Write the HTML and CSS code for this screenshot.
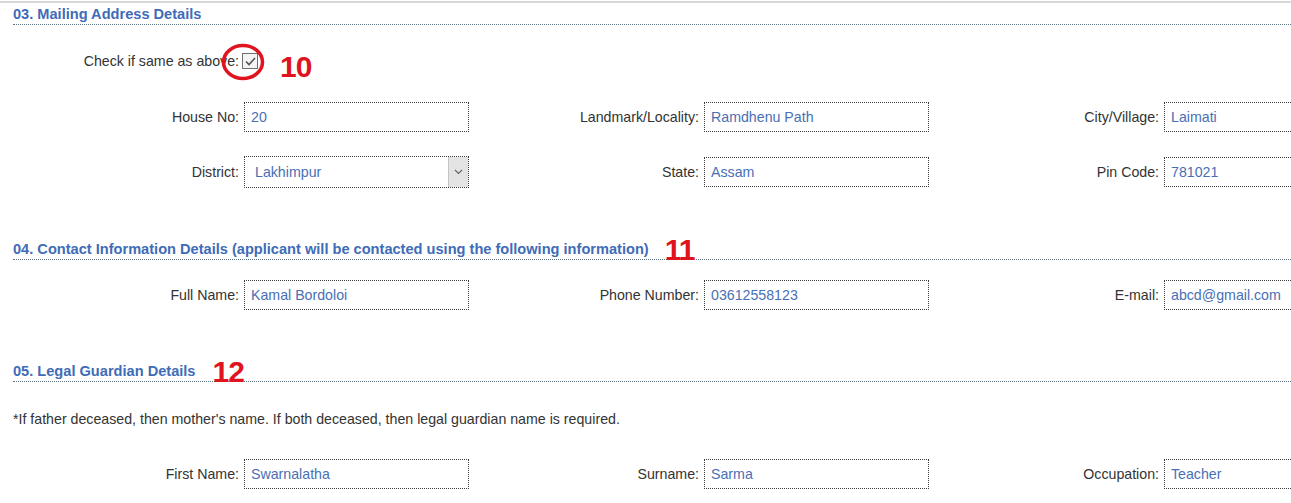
FILE: index.html
```html
<!DOCTYPE html>
<html>
<head>
<meta charset="utf-8">
<link rel="stylesheet" href="styles.css">
</head>
<body>
<div class="topline"></div>
<div class="page">
  <h2 class="heading h-03">03. Mailing Address Details</h2>

  <div class="check-row">
    <span class="label">Check if same as above:</span>
    <span class="check-wrap">
      <span class="checkbox">
        <svg width="11" height="9" viewBox="0 0 11 9"><path d="M1 4.5 L4 7.5 L10 1" fill="none" stroke="#555" stroke-width="1.6"/></svg>
      </span>
      <svg class="ring" width="44" height="38" viewBox="0 0 44 38"><ellipse cx="22" cy="19" rx="19.5" ry="16.5" fill="none" stroke="#e0141e" stroke-width="3.5"/></svg>
    </span>
    <span class="num num-10">10</span>
  </div>

  <div class="row row-1">
    <div class="field"><span class="label">House No:</span><input class="box" value="20" readonly></div>
    <div class="field"><span class="label">Landmark/Locality:</span><input class="box" value="Ramdhenu Path" readonly></div>
    <div class="field"><span class="label">City/Village:</span><input class="box" value="Laimati" readonly></div>
  </div>

  <div class="row row-2">
    <div class="field"><span class="label">District:</span>
      <div class="box select"><span class="select-text">Lakhimpur</span><span class="arrow"><svg width="9" height="6" viewBox="0 0 9 6"><path d="M1 1 L4.5 4.5 L8 1" fill="none" stroke="#666" stroke-width="1.2"/></svg></span></div>
    </div>
    <div class="field"><span class="label">State:</span><input class="box" value="Assam" readonly></div>
    <div class="field"><span class="label">Pin Code:</span><input class="box" value="781021" readonly></div>
  </div>

  <h2 class="heading h-04">04. Contact Information Details (applicant will be contacted using the following information)<span class="num num-11">11</span></h2>

  <div class="row row-3">
    <div class="field"><span class="label">Full Name:</span><input class="box" value="Kamal Bordoloi" readonly></div>
    <div class="field"><span class="label">Phone Number:</span><input class="box" value="03612558123" readonly></div>
    <div class="field"><span class="label">E-mail:</span><input class="box" value="abcd@gmail.com" readonly></div>
  </div>

  <h2 class="heading h-05">05. Legal Guardian Details<span class="num num-12">12</span></h2>

  <p class="note">*If father deceased, then mother's name. If both deceased, then legal guardian name is required.</p>

  <div class="row row-4">
    <div class="field"><span class="label">First Name:</span><input class="box" value="Swarnalatha" readonly></div>
    <div class="field"><span class="label">Surname:</span><input class="box" value="Sarma" readonly></div>
    <div class="field"><span class="label">Occupation:</span><input class="box" value="Teacher" readonly></div>
  </div>
</div>
</body>
</html>
```

FILE: styles.css
```css
html, body {
  margin: 0;
  padding: 0;
  overflow: hidden;
  background: #ffffff;
}

body {
  font-family: "Liberation Sans", Arial, sans-serif;
  font-size: 14.2px;
  color: #333333;
}

.topline {
  height: 2px;
  margin-top: 1px;
  background: #d8d8d8;
}

.page {
  padding-left: 13px;
}

.heading {
  margin: 0;
  font-size: 14.6px;
  font-weight: bold;
  line-height: 19px;
  color: #3f6cb7;
  border-bottom: 1px dotted #5d7585;
  white-space: nowrap;
}

.h-03 { margin-top: 2px; }
.h-04 { margin-top: 52px; }
.h-05 { margin-top: 52px; }

.num {
  display: inline-block;
  font-family: "Liberation Sans", Arial, sans-serif;
  font-weight: bold;
  font-size: 30px;
  line-height: 0;
  color: #e0141e;
  letter-spacing: -1px;
}

.num-11 { margin-left: 16px; vertical-align: -6px; }
.num-12 { margin-left: 17px; vertical-align: -6px; }

.check-row {
  display: flex;
  align-items: center;
  height: 30px;
  margin-top: 21px;
}

.label {
  width: 226px;
  flex: none;
  text-align: right;
  margin-right: 5px;
  white-space: nowrap;
}

.check-row .label {
  margin-right: 3px;
}

.check-wrap {
  position: relative;
  display: inline-flex;
}

.checkbox {
  width: 16px;
  height: 16px;
  box-sizing: border-box;
  border: 1px solid #707070;
  background: #f4f4f4;
  display: flex;
  align-items: center;
  justify-content: center;
}

.ring {
  position: absolute;
  left: -21px;
  top: -10px;
}

.num-10 {
  margin-left: 22px;
  position: relative;
  top: 6px;
}

.row {
  display: grid;
  grid-template-columns: repeat(3, 460px);
}

.row-1 { margin-top: 26px; }
.row-2 { margin-top: 24px; }
.row-3 { margin-top: 20px; }
.row-4 { margin-top: 31px; }

.field {
  display: flex;
  align-items: center;
}

.box {
  width: 225px;
  height: 30px;
  box-sizing: border-box;
  border: 1px dotted #3a3a3a;
  padding: 0 6px;
  margin: 0;
  font-family: "Liberation Sans", Arial, sans-serif;
  font-size: 14.2px;
  color: #4a6fb4;
  background: #ffffff;
  outline: none;
}

.select {
  height: 32px;
  display: flex;
  align-items: center;
  padding: 0 0 0 10px;
}

.select-text {
  flex: 1;
}

.arrow {
  width: 19px;
  align-self: stretch;
  background: #e4e4e4;
  border-left: 1px solid #c4c4c4;
  display: flex;
  align-items: center;
  justify-content: center;
}

.note {
  margin: 29px 0 0 0;
  line-height: 17px;
  font-size: 14.2px;
  color: #333333;
}
```
